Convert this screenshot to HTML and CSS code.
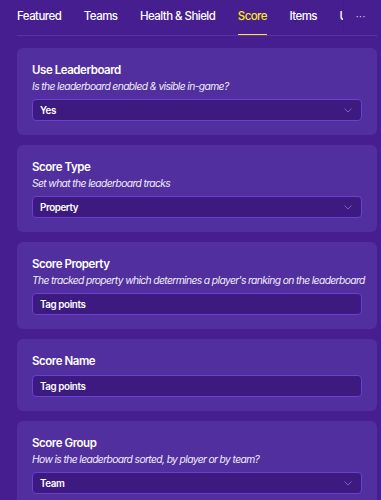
FILE: index.html
```html
<!DOCTYPE html>
<html lang="en">
	<head>
		<meta charset="UTF-8" />
		<meta name="viewport" content="width=device-width, initial-scale=1.0" />
		<title>Score Settings</title>
		<link rel="stylesheet" href="styles.css">
	</head>
	<body>
		<header class="tabs">
			<nav class="tab-list">
				<a class="tab">Featured</a>
				<a class="tab">Teams</a>
				<a class="tab">Health &amp; Shield</a>
				<a class="tab active">Score</a>
				<a class="tab">Items</a>
				<a class="tab">Upgrades</a>
			</nav>
			<button class="tab-more">···</button>
		</header>

		<main class="settings">
			<section class="field">
				<h3 class="field-title">Use Leaderboard</h3>
				<p class="field-hint">Is the leaderboard enabled &amp; visible in-game?</p>
				<div class="select">
					<span>Yes</span>
					<svg class="chevron" viewBox="0 0 8 5" width="8" height="5"><path d="M0.5 0.5 L4 4 L7.5 0.5" /></svg>
				</div>
			</section>

			<section class="field">
				<h3 class="field-title">Score Type</h3>
				<p class="field-hint">Set what the leaderboard tracks</p>
				<div class="select">
					<span>Property</span>
					<svg class="chevron" viewBox="0 0 8 5" width="8" height="5"><path d="M0.5 0.5 L4 4 L7.5 0.5" /></svg>
				</div>
			</section>

			<section class="field">
				<h3 class="field-title">Score Property</h3>
				<p class="field-hint">The tracked property which determines a player's ranking on the leaderboard</p>
				<div class="select">
					<span>Tag points</span>
				</div>
			</section>

			<section class="field">
				<h3 class="field-title">Score Name</h3>
				<div class="select">
					<span>Tag points</span>
				</div>
			</section>

			<section class="field">
				<h3 class="field-title">Score Group</h3>
				<p class="field-hint">How is the leaderboard sorted, by player or by team?</p>
				<div class="select">
					<span>Team</span>
					<svg class="chevron" viewBox="0 0 8 5" width="8" height="5"><path d="M0.5 0.5 L4 4 L7.5 0.5" /></svg>
				</div>
			</section>
		</main>
	</body>
</html>
```

FILE: styles.css
```css
body {
	font-family: Inter, "Noto Sans", sans-serif;
	margin: 0;
	padding: 0;
	background-color: #461e8f;
	color: #fff;
	overflow: hidden;
}

.tabs {
	display: flex;
	margin: 0 4px 0 17px;
	height: 35px;
	border-bottom: 1px solid #5633a6;
}

.tab-list {
	display: flex;
	gap: 22.5px;
	flex: 1;
	overflow: hidden;
	white-space: nowrap;
}

.tab {
	font-size: 11.5px;
	font-weight: 500;
	letter-spacing: -0.55px;
	line-height: 16px;
	padding-top: 8px;
	height: 26px;
	border-bottom: 2px solid transparent;
	color: #fff;
}

.tab.active {
	color: #ffe81a;
	border-bottom-color: #ffe81a;
}

.tab-more {
	width: 34px;
	flex-shrink: 0;
	background-color: #461e8f;
	border: none;
	border-left: 1px solid #431c89;
	color: #e6dcf7;
	font-size: 10px;
	padding: 0 0 3px;
}

.settings {
	display: flex;
	flex-direction: column;
	gap: 10px;
	padding: 12px 4px 0 17px;
}

.field {
	background-color: #522f9e;
	border-radius: 6px;
	padding: 14px 15px;
}

.field-title {
	margin: 0;
	font-size: 11.5px;
	font-weight: 600;
	line-height: 17px;
	letter-spacing: -0.45px;
}

.field-hint {
	margin: 0;
	font-size: 10.3px;
	font-style: italic;
	line-height: 15px;
	color: #f1ecfa;
	letter-spacing: -0.62px;
	white-space: nowrap;
}

.select {
	display: flex;
	align-items: center;
	justify-content: space-between;
	box-sizing: border-box;
	height: 22px;
	margin-top: 5px;
	padding: 0 9px 0 7px;
	background-color: #3d1a80;
	border: 1px solid #6a40d2;
	border-radius: 4px;
	font-size: 9.8px;
	font-weight: 600;
	letter-spacing: -0.4px;
}

.chevron {
	fill: none;
	stroke: #7c5cc6;
	stroke-width: 1;
}
```
